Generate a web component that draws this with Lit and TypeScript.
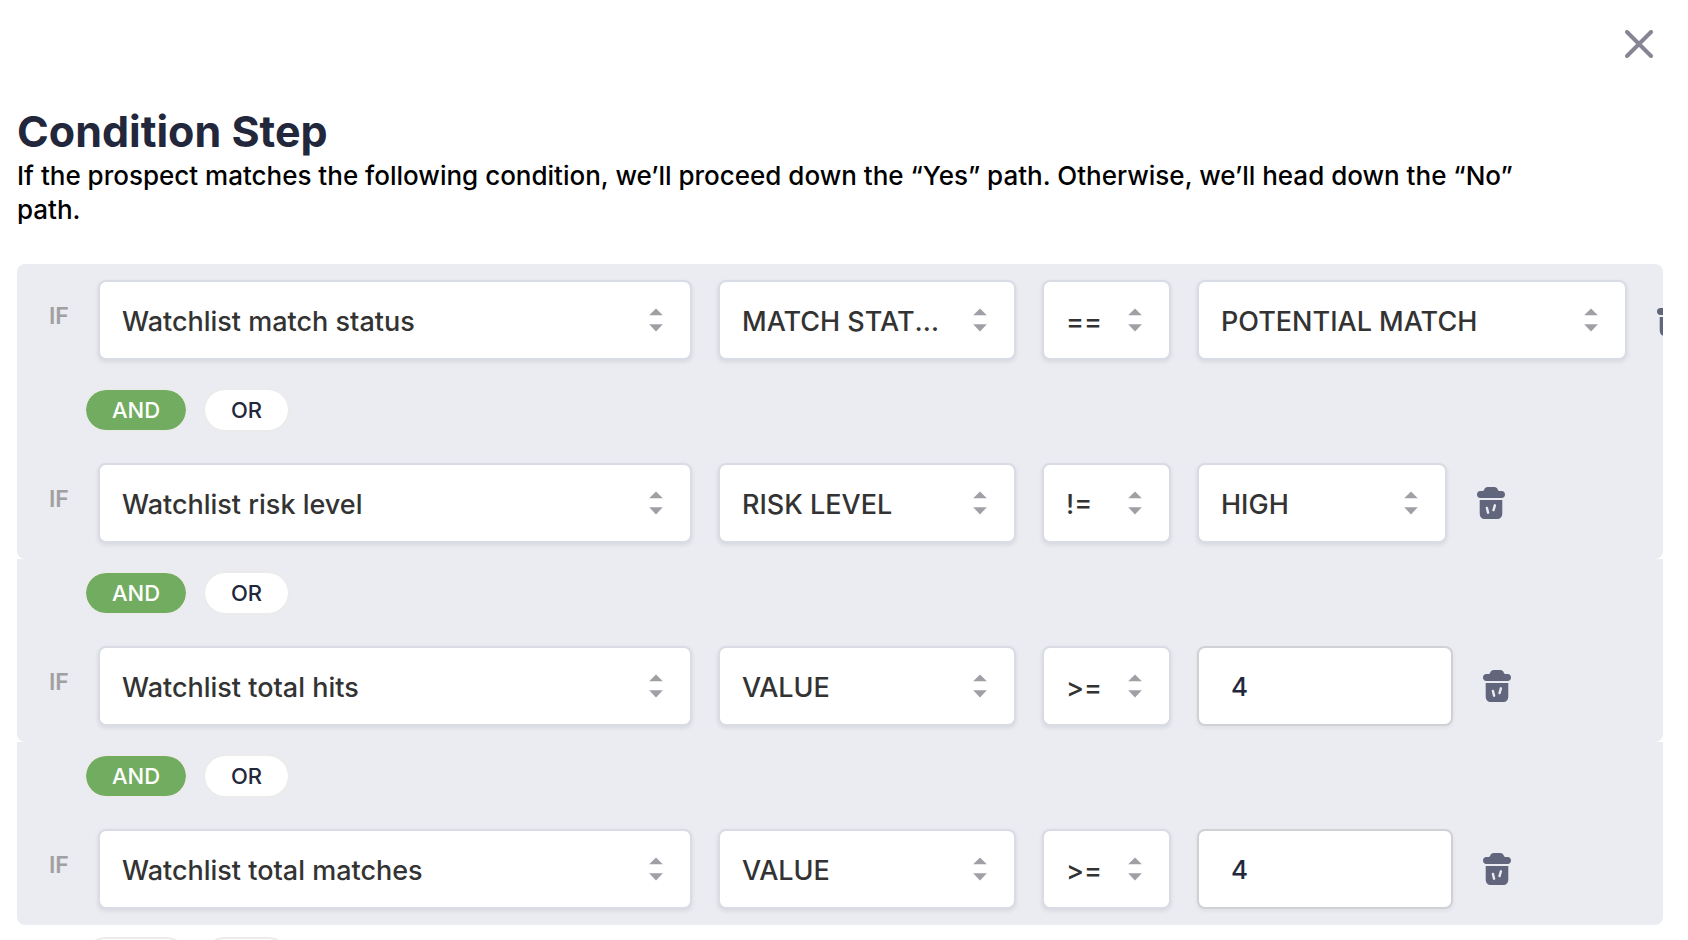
import { LitElement, html, css, svg, nothing } from "lit";
import { customElement, property, state } from "lit/decorators.js";
import { classMap } from "lit/directives/class-map.js";

type Join = "AND" | "OR" | null;

interface Condition {
  subject: string;
  field: string;
  operator: string;
  kind: "long" | "short" | "number";
  value: string;
  join: Join;
}

const SUBJECTS = [
  "Watchlist match status",
  "Watchlist risk level",
  "Watchlist total hits",
  "Watchlist total matches",
];
const FIELDS = ["MATCH STATUS", "RISK LEVEL", "VALUE"];
const OPERATORS = ["==", "!=", ">=", "<="];
const STATUSES = ["POTENTIAL MATCH", "NO MATCH"];
const LEVELS = ["HIGH", "MEDIUM", "LOW"];

@customElement("sort-select")
export class SortSelect extends LitElement {
  @property() label = "";
  @property() value = "";
  @property({ attribute: false }) options: string[] = [];

  static styles = css`
    :host {
      display: block;
      position: relative;
      flex: none;
    }
    .field {
      box-sizing: border-box;
      display: block;
      width: 100%;
      height: 80px;
      margin: 0;
      padding: 4px 64px 0 22px;
      appearance: none;
      border: 2px solid #d9dbe5;
      border-radius: 8px;
      background: #fff;
      box-shadow: 0 2px 4px rgba(35, 40, 60, 0.1);
      color: #333;
      font: 500 27px/34px Inter, sans-serif;
      text-overflow: ellipsis;
      white-space: nowrap;
      overflow: hidden;
    }
    .arrows {
      position: absolute;
      top: 0;
      bottom: 0;
      right: 29px;
      margin: auto 0;
      width: 14px;
      height: 24px;
      fill: #9f9fa6;
      pointer-events: none;
    }
  `;

  render() {
    return html`
      <select class="field" aria-label=${this.label}>
        ${this.options.map(
          (o) => html`<option ?selected=${o === this.value}>${o}</option>`
        )}
      </select>
      <svg class="arrows" viewBox="0 0 14 24" aria-hidden="true">
        <path d="M7 .5 13.8 7.3H.2z" />
        <path d="M7 23.5.2 16.2h13.6z" />
      </svg>
    `;
  }
}

@customElement("join-toggle")
export class JoinToggle extends LitElement {
  @property() value: Join = null;

  static styles = css`
    :host {
      display: flex;
      gap: 15px;
      padding: 12px 0 0 67px;
    }
    .pill {
      box-sizing: border-box;
      height: 44px;
      margin: 0;
      padding: 0 24px;
      border: 2px solid #ebebeb;
      border-radius: 22px;
      background: #fff;
      background-clip: padding-box;
      color: #22273b;
      font: 500 22px/40px Inter, sans-serif;
      cursor: pointer;
    }
    .on {
      background-color: #72ac60;
      color: #fff;
    }
    .and {
      width: 104px;
    }
    .or {
      width: 87px;
    }
  `;

  private pick(value: Join) {
    this.value = value;
  }

  render() {
    return html`
      <button
        class=${classMap({ pill: true, and: true, on: this.value === "AND" })}
        aria-pressed=${this.value === "AND"}
        @click=${() => this.pick("AND")}
      >AND</button>
      <button
        class=${classMap({ pill: true, or: true, on: this.value === "OR" })}
        aria-pressed=${this.value === "OR"}
        @click=${() => this.pick("OR")}
      >OR</button>
    `;
  }
}

const trash = svg`
  <path d="M10.600 0h6.800c1.700 0 2.600 1 3.200 2.200.5 1.100.9 1.800 2.200 1.800h1.900C26.600 4 28 5.500 28 7.500S26.600 11 24.700 11H3.300C1.400 11 0 9.500 0 7.500S1.400 4 3.300 4h1.900c1.300 0 1.700-.7 2.200-1.800C8 1 8.900 0 10.600 0z"/>
  <path d="M2.700 13h22.600v13.200c0 3.600-2 5.800-5.400 5.800H8.100c-3.400 0-5.400-2.200-5.400-5.800z"/>
  <path class="mark" d="M9.900 20.900l1.200 4.800M17.900 18.300l-1.400 4.800"/>`;

@customElement("app-root")
export class AppRoot extends LitElement {
  @state() private conditions: Condition[] = [
    { subject: SUBJECTS[0], field: "MATCH STATUS", operator: "==", kind: "long", value: "POTENTIAL MATCH", join: null },
    { subject: SUBJECTS[1], field: "RISK LEVEL", operator: "!=", kind: "short", value: "HIGH", join: "AND" },
    { subject: SUBJECTS[2], field: "VALUE", operator: ">=", kind: "number", value: "4", join: "AND" },
    { subject: SUBJECTS[3], field: "VALUE", operator: ">=", kind: "number", value: "4", join: "AND" },
  ];

  static styles = css`
    :host {
      display: block;
      height: 100vh;
      overflow: auto;
      scrollbar-width: none;
      background: #fff;
      font-family: Inter, sans-serif;
    }
    .dialog {
      padding: 30px 25px 40px 17px;
    }
    .top {
      display: flex;
      justify-content: flex-end;
      padding: 0 10px 45px 0;
    }
    .icon-button {
      flex: none;
      display: block;
      margin: 0;
      padding: 0;
      border: 0;
      background: none;
      cursor: pointer;
    }
    .close {
      display: block;
      width: 28px;
      height: 28px;
      fill: none;
      stroke: #878593;
      stroke-width: 4;
      stroke-linecap: round;
    }
    .title {
      margin: 0;
      color: #22273b;
      font-size: 43px;
      font-weight: 700;
      line-height: 56px;
    }
    .lead {
      margin: 0 0 37px;
      padding-right: 120px;
      color: #000;
      font-size: 26px;
      font-weight: 500;
      line-height: 34px;
    }
    .block {
      background: #ebecf1;
      border-radius: 0 0 8px 8px;
      overflow: hidden;
    }
    .first {
      border-radius: 8px 8px 0 0;
    }
    .row {
      display: flex;
      align-items: center;
      gap: 26px;
      padding: 16px 0 16px 32px;
    }
    .joined {
      padding-top: 31px;
    }
    .if {
      flex: none;
      align-self: flex-start;
      width: 23px;
      color: #a0a0a3;
      font-size: 23px;
      font-weight: 600;
      line-height: 72px;
      height: 72px;
    }
    .subject {
      width: 594px;
    }
    .property {
      width: 298px;
    }
    .operator {
      width: 129px;
    }
    .long {
      width: 430px;
    }
    .short {
      width: 250px;
    }
    .number {
      flex: none;
      box-sizing: border-box;
      width: 256px;
      height: 80px;
      margin: 0;
      padding: 0 32px;
      border: 2px solid #d0d1d5;
      border-radius: 8px;
      background: #fff;
      box-shadow: 0 2px 4px rgba(35, 40, 60, 0.06);
      color: #22273b;
      font: 500 26px/34px Inter, sans-serif;
    }
    .remove {
      padding: 0 4px;
    }
    .trash {
      display: block;
      width: 28px;
      height: 32px;
      fill: #62667c;
    }
    .mark {
      fill: none;
      stroke: #ebecf1;
      stroke-width: 2.4;
      stroke-linecap: round;
    }
  `;

  private renderValue(c: Condition) {
    if (c.kind === "number") {
      return html`<input class="number" type="text" inputmode="numeric" aria-label="Value" .value=${c.value} />`;
    }
    return html`<sort-select
      class=${c.kind}
      label="Value"
      .options=${c.kind === "long" ? STATUSES : LEVELS}
      value=${c.value}
    ></sort-select>`;
  }

  private renderCondition(c: Condition) {
    return html`
      <section class=${classMap({ block: true, first: !c.join })}>
        ${c.join ? html`<join-toggle value=${c.join}></join-toggle>` : nothing}
        <div class=${classMap({ row: true, joined: !!c.join })}>
          <span class="if">IF</span>
          <sort-select class="subject" label="Subject" .options=${SUBJECTS} value=${c.subject}></sort-select>
          <sort-select class="property" label="Property" .options=${FIELDS} value=${c.field}></sort-select>
          <sort-select class="operator" label="Operator" .options=${OPERATORS} value=${c.operator}></sort-select>
          ${this.renderValue(c)}
          <button class="icon-button remove" aria-label="Remove condition">
            <svg class="trash" viewBox="0 0 28 32" aria-hidden="true">${trash}</svg>
          </button>
        </div>
      </section>
    `;
  }

  render() {
    return html`
      <main class="dialog">
        <div class="top">
          <button class="icon-button" aria-label="Close">
            <svg class="close" viewBox="0 0 28 28" aria-hidden="true">
              <path d="M2 2l24 24M26 2L2 26" />
            </svg>
          </button>
        </div>
        <h1 class="title">Condition Step</h1>
        <p class="lead">
          If the prospect matches the following condition, we’ll proceed down the “Yes” path.
          Otherwise, we’ll head down the “No” path.
        </p>
        ${this.conditions.map((c) => this.renderCondition(c))}
        <join-toggle></join-toggle>
      </main>
    `;
  }
}
